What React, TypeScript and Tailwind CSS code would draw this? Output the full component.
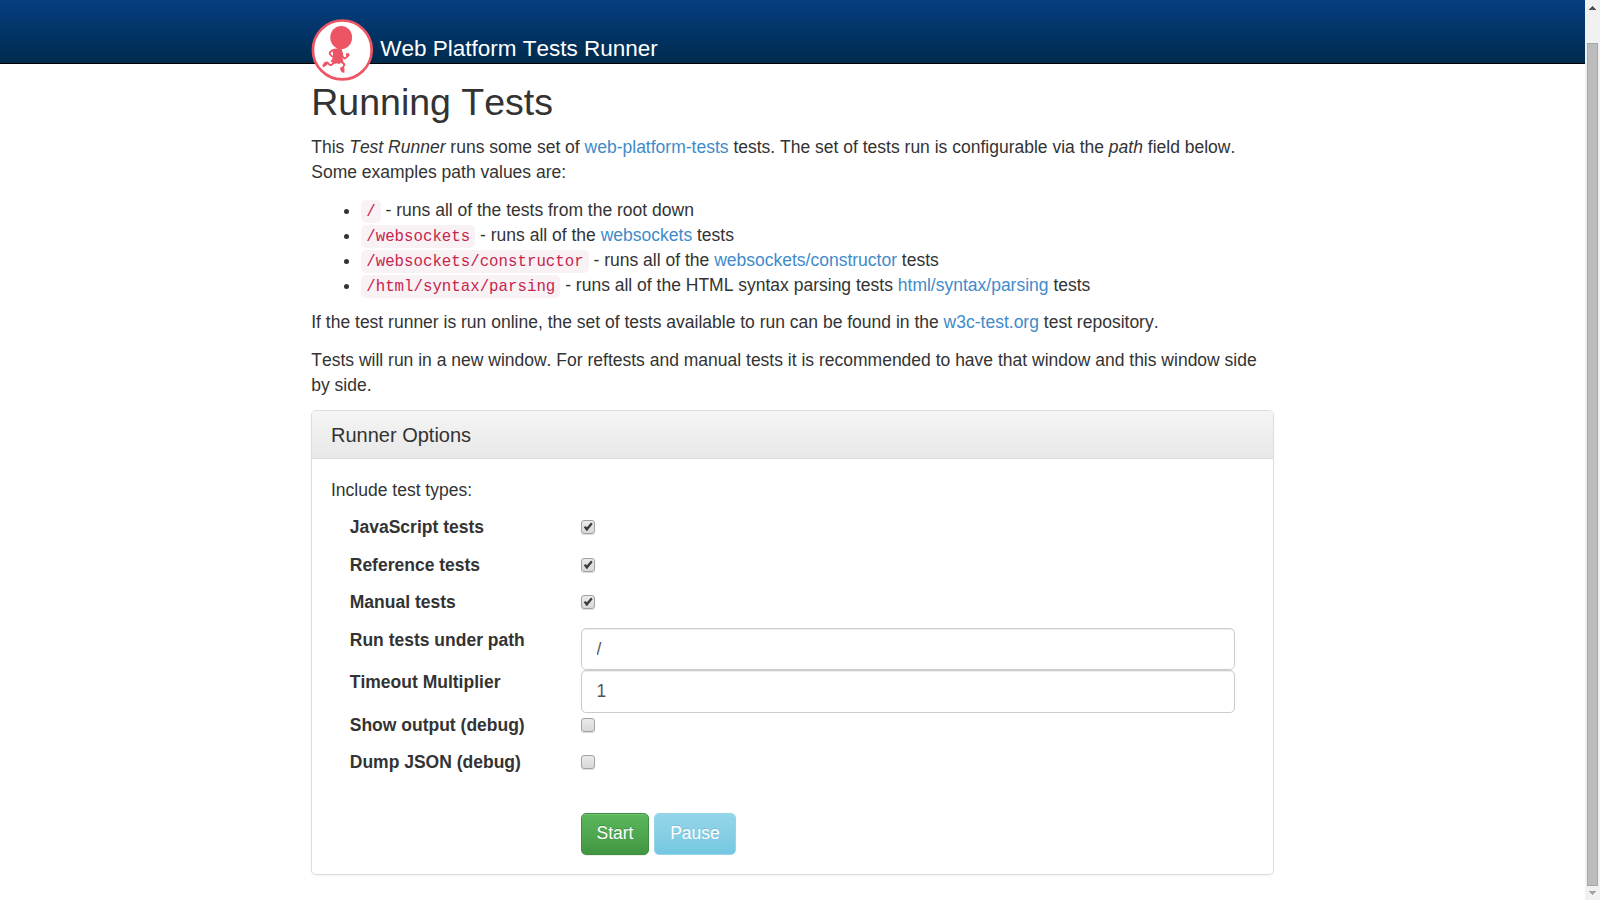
import type { ReactNode } from "react";

function Logo() {
  return (
    <svg viewBox="0 0 62 62" className="h-[62px] w-[62px] shrink-0">
      <circle cx="31.3" cy="30.9" r="29.4" fill="#fff" stroke="#ed5565" strokeWidth="2.7" />
      <g fill="#ed5565">
        <ellipse cx="30.2" cy="18.5" rx="10.9" ry="11.6" />
        <path d="M20.8 30.8 Q25 28.4 30.6 29.8 L32 35 L31.4 38.4 L32.6 43.8 L29.8 43.4 L28.2 45.2 L26 44.2 L23.4 45 L22.7 43.6 L19.6 42.8 L22 38.6 L22 34 Z" />
        <path d="M11.8 48.2 Q11.2 45.4 13.2 43.6 Q15.8 41.4 17.8 43.2 Q16.8 45.8 14.9 46.8 Q13.4 48 11.8 48.2 Z" />
        <path d="M29 48.4 Q32 47 33.6 49.4 L33.3 54 Q30.6 53.8 29.6 51.6 Z" />
        <circle cx="36.7" cy="35.8" r="1.9" />
      </g>
      <g fill="none" stroke="#ed5565" strokeWidth="1.9" strokeLinecap="round" strokeLinejoin="round">
        <path d="M22.2 31.2 Q18.4 32.8 18.7 34.8 Q19.4 36.8 22.4 38" />
        <path d="M30.6 34 Q31.8 39 33.6 39.6 Q35.8 39.2 36.8 36.4" />
        <path d="M22.6 43 Q21.6 46.6 19 46 Q17.8 45 16.4 44" />
        <path d="M30.6 43.4 Q33.6 44.4 33.2 46.2 Q32.4 47.4 31.4 49.4" />
      </g>
    </svg>
  );
}

function Link({ children }: { children: ReactNode }) {
  return <a className="text-[#428bca]">{children}</a>;
}

function Code({ children }: { children: ReactNode }) {
  return (
    <code className="rounded-[5px] bg-[#f9f2f4] px-[5px] py-[2.5px] font-['Liberation_Mono',monospace] text-[15.75px] text-[#c7254e]">
      {children}
    </code>
  );
}

function Checkbox({ checked = false }: { checked?: boolean }) {
  return (
    <span
      role="checkbox"
      aria-checked={checked}
      className="mt-[5px] block h-[14px] w-[14px] rounded-[3px] border border-[#a2a2a2] bg-linear-to-b from-[#ebebeb] to-[#d8d8d8] shadow-[0_1px_1px_rgba(0,0,0,0.15)]"
    >
      {checked && (
        <svg viewBox="0 0 12 12" className="block h-[12px] w-[12px]">
          <path d="M1.8 6.2 L3.4 4.9 L4.9 6.3 L9.1 1.6 L10.7 3 L5.1 10 L4.3 9.8 Z" fill="#3c3c3c" />
        </svg>
      )}
    </span>
  );
}

function Row({ label, children, tight = false }: { label: string; children: ReactNode; tight?: boolean }) {
  return (
    <div className={tight ? "flex h-[42.5px]" : "flex h-[37.5px]"}>
      <label className="w-1/4 pl-[18.75px] font-bold">{label}</label>
      <div className="w-3/4 px-[18.75px]">{children}</div>
    </div>
  );
}

function Field({ value }: { value: string }) {
  return (
    <input
      defaultValue={value}
      className="block h-[42.5px] w-full rounded-[5px] border border-[#ccc] bg-white px-[15px] py-[7.5px] text-[17.5px] leading-[25px] text-[#555] shadow-[inset_0_1px_1px_rgba(0,0,0,0.075)] outline-none"
    />
  );
}

function Scrollbar() {
  return (
    <div className="flex w-[15px] shrink-0 flex-col items-end bg-[#f1f1f1] pr-[2px]">
      <div className="flex h-[43px] w-[11px] justify-center pt-[6px]">
        <svg viewBox="0 0 7 4" className="h-[4px] w-[7px]" shapeRendering="crispEdges">
          <path d="M3 0h1v1h1v1h1v1h1v1H0V3h1V2h1V1h1z" fill="#505050" />
        </svg>
      </div>
      <div className="w-[11px] flex-1 border border-[#a8a8a8] bg-[#bcbcbc]" />
      <div className="flex h-[14px] w-[11px] justify-center pt-[5px]">
        <svg viewBox="0 0 7 4" className="h-[4px] w-[7px]" shapeRendering="crispEdges">
          <path d="M0 0h7v1H6v1H5v1H4v1H3V3H2V2H1V1H0z" fill="#a3a3a3" />
        </svg>
      </div>
    </div>
  );
}

export default function App() {
  return (
    <div className="flex h-[900px] w-[1600px] overflow-hidden bg-white font-['Liberation_Sans',Arial,sans-serif] text-[17.5px] leading-[25px] text-[#333] [font-kerning:none]">
      <div className="min-w-0 flex-1">
        <header className="h-[64px] border-b border-black bg-linear-to-b from-[#063e82] to-[#002b4d]">
          <div className="mx-auto flex w-[962.5px] pt-[19px]">
            <Logo />
            <span className="ml-[7px] pt-[17px] text-[22.5px] leading-[25px] text-white">Web Platform Tests Runner</span>
          </div>
        </header>

        <main className="mx-auto w-[962.5px] pt-[17.6px]">
          <h1 className="mb-[12.5px] text-[37.5px] leading-[41px]">Running Tests</h1>
          <p className="mb-[12.5px]">
            This <em>Test Runner</em> runs some set of <Link>web-platform-tests</Link> tests. The set of tests run is
            configurable via the <em>path</em> field below. Some examples path values are:
          </p>
          <ul className="mb-[12.5px] list-disc pl-[50px]">
            <li className="h-[25px]"><Code>/</Code> - runs all of the tests from the root down</li>
            <li className="h-[25px]"><Code>/websockets</Code> - runs all of the <Link>websockets</Link> tests</li>
            <li className="h-[25px]"><Code>/websockets/constructor</Code> - runs all of the <Link>websockets/constructor</Link> tests</li>
            <li className="h-[25px]"><Code>/html/syntax/parsing</Code> - runs all of the HTML syntax parsing tests <Link>html/syntax/parsing</Link> tests</li>
          </ul>
          <p className="mb-[12.5px]">
            If the test runner is run online, the set of tests available to run can be found in the{" "}
            <Link>w3c-test.org</Link> test repository.
          </p>
          <p className="mb-[12.5px]">
            Tests will run in a new window. For reftests and manual tests it is recommended to have that window and this
            window side by side.
          </p>

          <section className="h-[464.5px] rounded-[5px] border border-[#ddd] shadow-[0_1px_2px_rgba(0,0,0,0.05)]">
            <h2 className="h-[48px] rounded-t-[4px] border-b border-[#ddd] bg-linear-to-b from-[#f5f5f5] to-[#e8e8e8] px-[18.75px] py-[12.5px] text-[20px] leading-[22px]">
              Runner Options
            </h2>
            <form className="p-[18.75px]">
              <p className="mb-[12.5px]">Include test types:</p>
              <Row label="JavaScript tests"><Checkbox checked /></Row>
              <Row label="Reference tests"><Checkbox checked /></Row>
              <Row label="Manual tests"><Checkbox checked /></Row>
              <Row label="Run tests under path" tight><Field value="/" /></Row>
              <Row label="Timeout Multiplier" tight><Field value="1" /></Row>
              <Row label="Show output (debug)"><Checkbox /></Row>
              <Row label="Dump JSON (debug)"><Checkbox /></Row>
              <div className="ml-[25%] flex gap-[5px] pt-[25px] pl-[18.75px] text-white">
                <button
                  type="button"
                  className="h-[42px] w-[68px] rounded-[5px] border border-[#3e8f3e] bg-linear-to-b from-[#5cb85c] to-[#419641] pl-px shadow-[inset_0_1px_0_rgba(255,255,255,0.15),0_1px_1px_rgba(0,0,0,0.075)] [text-shadow:0_-1px_0_rgba(0,0,0,0.2)]"
                >
                  Start
                </button>
                <button
                  type="button"
                  disabled
                  className="h-[42px] w-[82px] rounded-[5px] border border-[#5bc0de] bg-linear-to-b from-[#5bc0de] to-[#2aabd2] pl-px opacity-65 [text-shadow:0_-1px_0_rgba(0,0,0,0.2)]"
                >
                  Pause
                </button>
              </div>
            </form>
          </section>
        </main>
      </div>
      <Scrollbar />
    </div>
  );
}
